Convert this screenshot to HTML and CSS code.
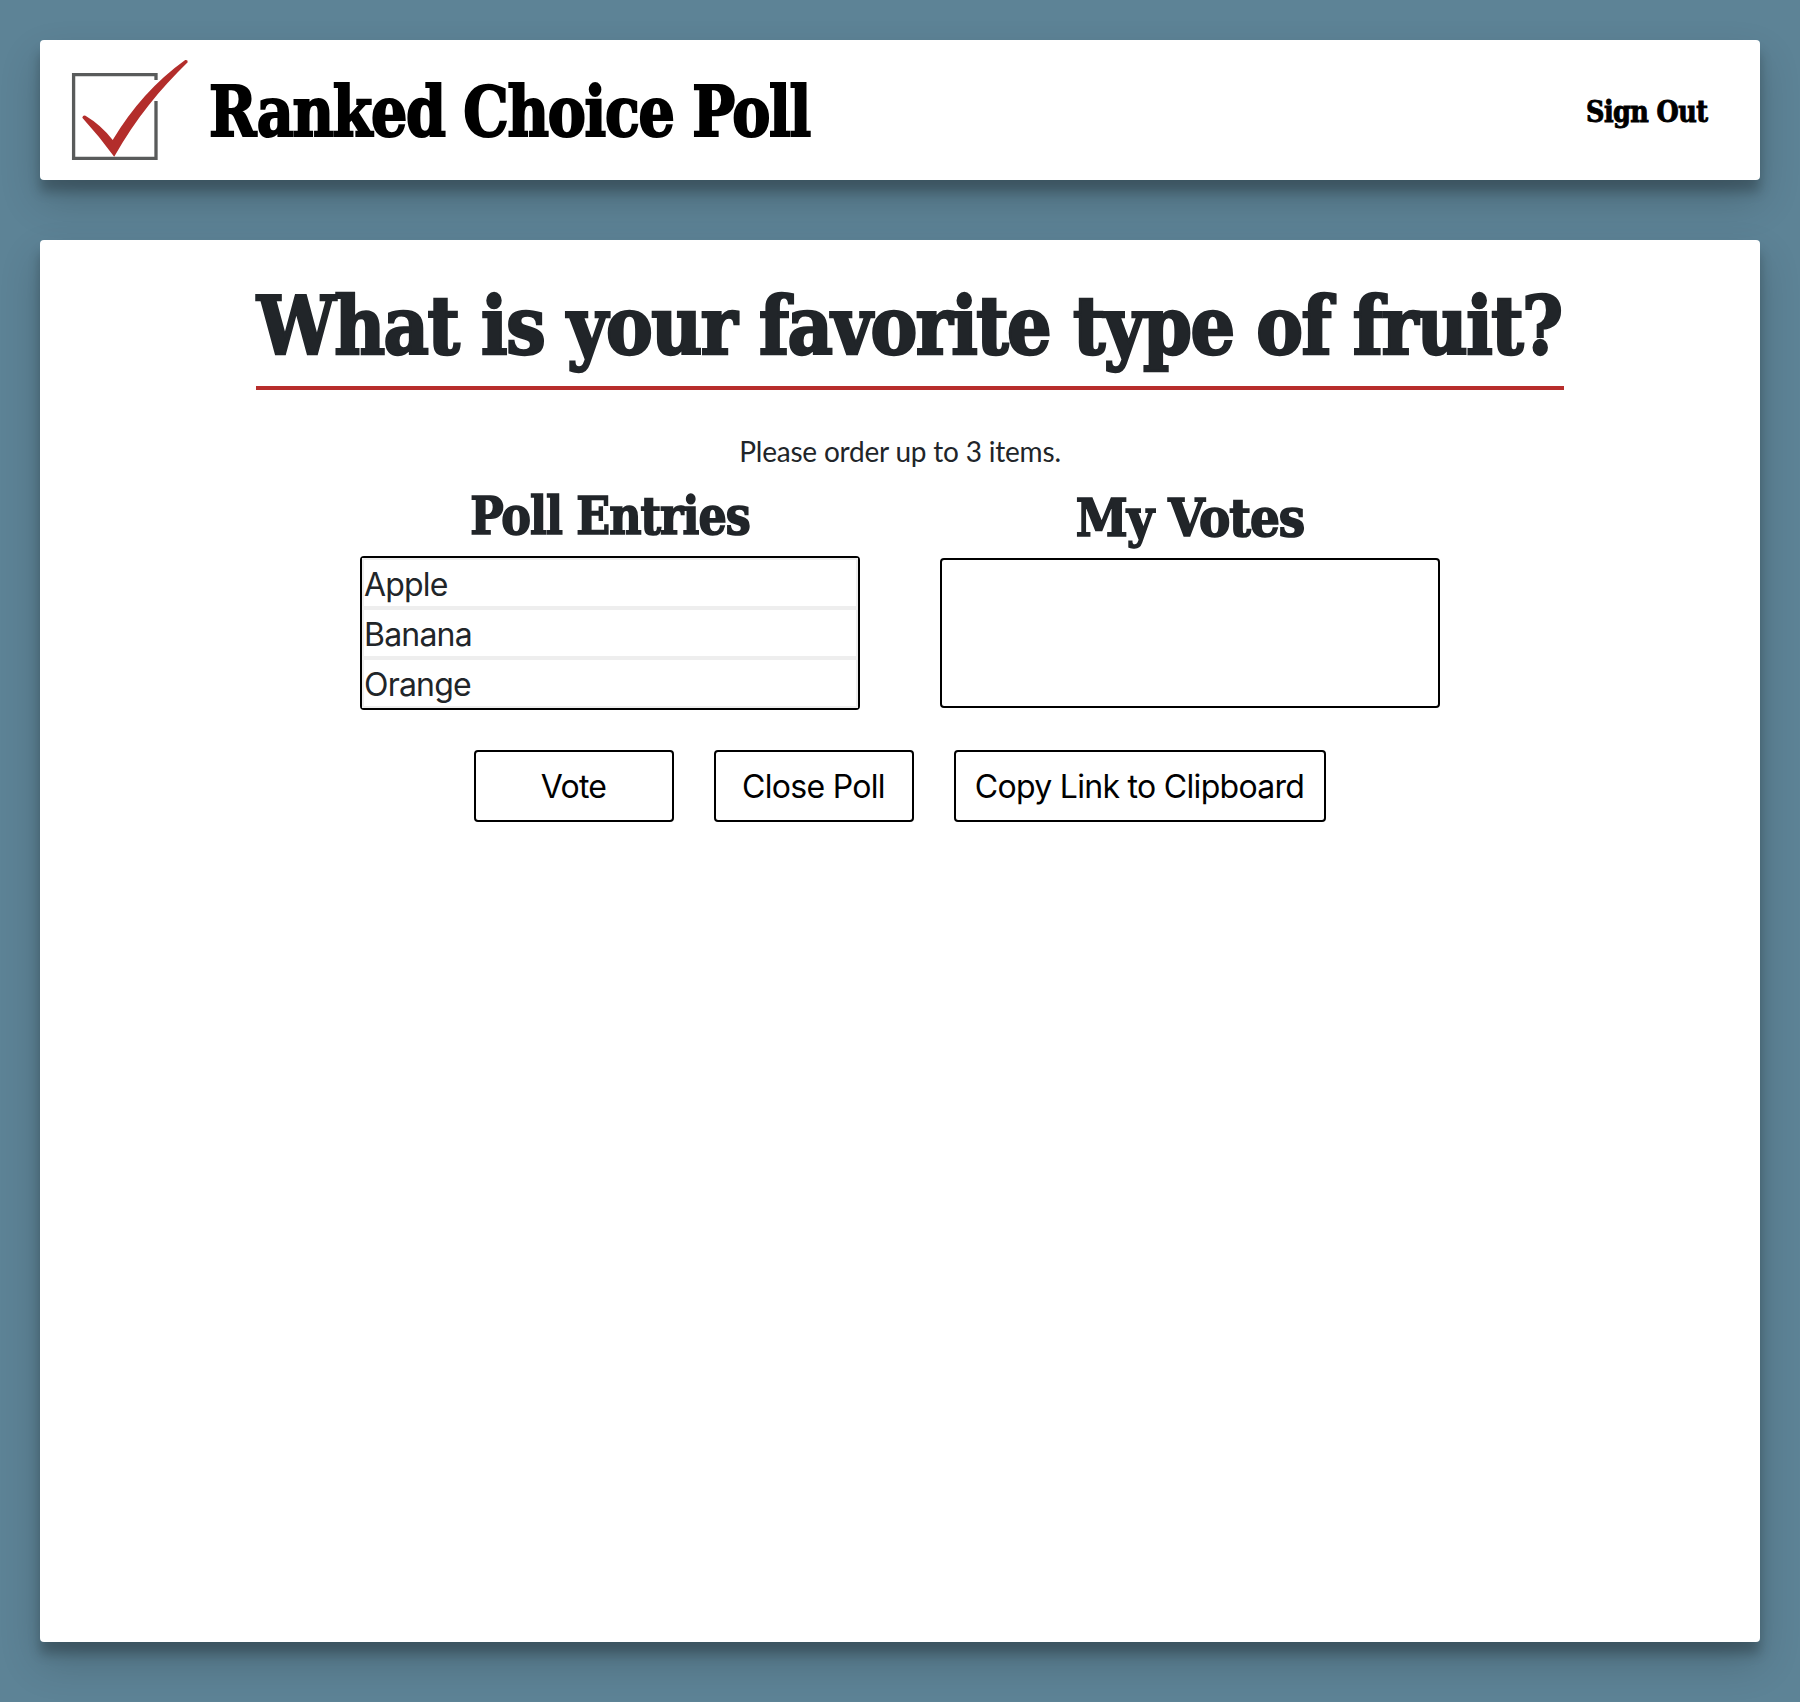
FILE: index.html
```html
<!DOCTYPE html>
<html lang="en">
<head>
<meta charset="utf-8">
<title>Ranked Choice Poll</title>
<link rel="stylesheet" href="styles.css">
</head>
<body>
<header class="card header">
  <a class="brand">
    <svg class="logo" viewBox="0 0 120 102" aria-hidden="true">
      <path d="M86 21V15.600H3.600V99.300H86V42" fill="none" stroke="#595b5b" stroke-width="3.300"/>
      <path d="M12.300 58.800Q12.800 56 15.500 56.800Q31 66 42.700 81Q72 32 115.200 1Q118 .5 117.700 3.300C90 30 66 59.500 44.200 97.800Q29 77 12.300 58.800Z" fill="#b32d2b"/>
    </svg>
    <span class="slab brand-name">Ranked Choice Poll</span>
  </a>
  <a class="slab sign-out">Sign Out</a>
</header>
<main class="card poll">
  <h1 class="question"><span class="slab question-text">What is your favorite type of fruit?</span></h1>
  <p class="hint">Please order up to 3 items.</p>
  <div class="columns">
    <section class="column">
      <h2 class="slab column-title entries-title">Poll Entries</h2>
      <ul class="list">
        <li class="item">Apple</li>
        <li class="item">Banana</li>
        <li class="item">Orange</li>
      </ul>
    </section>
    <section class="column">
      <h2 class="slab column-title votes-title">My Votes</h2>
      <ul class="list empty"></ul>
    </section>
  </div>
  <div class="actions">
    <button class="button">Vote</button>
    <button class="button">Close Poll</button>
    <button class="button wide">Copy Link to Clipboard</button>
  </div>
</main>
</body>
</html>
```
FILE: styles.css
```css
* { box-sizing: border-box; }
body {
  margin: 0;
  padding: 40px;
  height: 1702px;
  background: #5d8396;
  color: #212529;
  font-family: Inter, "Liberation Sans", sans-serif;
}
.card {
  background: #fff;
  border-radius: 4px;
  box-shadow: 0 20px 40px rgba(0, 0, 0, .19), 0 12px 12px rgba(0, 0, 0, .23);
}
.slab {
  font-family: "DejaVu Serif Condensed", "DejaVu Serif", serif;
  font-weight: bold;
  letter-spacing: -.02em;
  white-space: nowrap;
  -webkit-text-stroke: .03em currentColor;
}
.header {
  display: flex;
  justify-content: space-between;
  align-items: center;
  height: 140px;
  padding: 0 53px 0 30px;
  color: #000;
}
.brand { display: flex; align-items: center; }
.logo { width: 120px; height: 102px; margin-right: 19px; overflow: visible; }
.brand-name {
  font-size: 69px;
  line-height: 80px;
  padding-top: 4px;
  transform: scaleX(.92);
  transform-origin: left;
}
.sign-out {
  font-size: 30px;
  line-height: 36px;
  padding-top: 3px;
  transform: scaleX(.945);
  transform-origin: right;
}
.poll {
  display: flex;
  flex-direction: column;
  align-items: center;
  height: 1402px;
  margin-top: 60px;
  padding-top: 40px;
}
.question {
  width: 1308px;
  margin: 0 0 0 20px;
  padding-bottom: 14px;
  border-bottom: 4px solid #b72d2b;
  font-size: 80px;
  line-height: 92px;
}
.question-text {
  display: block;
  padding-left: 1px;
  transform: scaleX(.974);
  transform-origin: left;
}
.hint {
  margin: 40px 0 12px;
  font: 28px/42px Lato, sans-serif;
  letter-spacing: -.2px;
}
.columns { display: flex; align-items: center; gap: 80px; }
.column { width: 500px; }
.column-title {
  margin: 0 0 10px;
  font-size: 53px;
  line-height: 62px;
  text-align: center;
}
.entries-title { transform: scaleX(.933); }
.votes-title { transform: scaleX(.985); }
.list {
  margin: 0;
  padding: 0;
  border: 2px solid #000;
  border-radius: 4px;
  list-style: none;
}
.empty { height: 150px; }
.item {
  height: 50px;
  border: 2px solid #eee;
  padding-top: 2px;
  font-size: 32px;
  line-height: 46px;
  letter-spacing: -.8px;
}
.actions { display: flex; gap: 40px; margin-top: 40px; }
.button {
  width: 200px;
  height: 72px;
  padding: 2px 1px 0 0;
  border: 2px solid #000;
  border-radius: 4px;
  background: #fff;
  color: #000;
  font: 32px/40px Inter, "Liberation Sans", sans-serif;
  letter-spacing: -.7px;
}
.wide { width: 372px; }
```
